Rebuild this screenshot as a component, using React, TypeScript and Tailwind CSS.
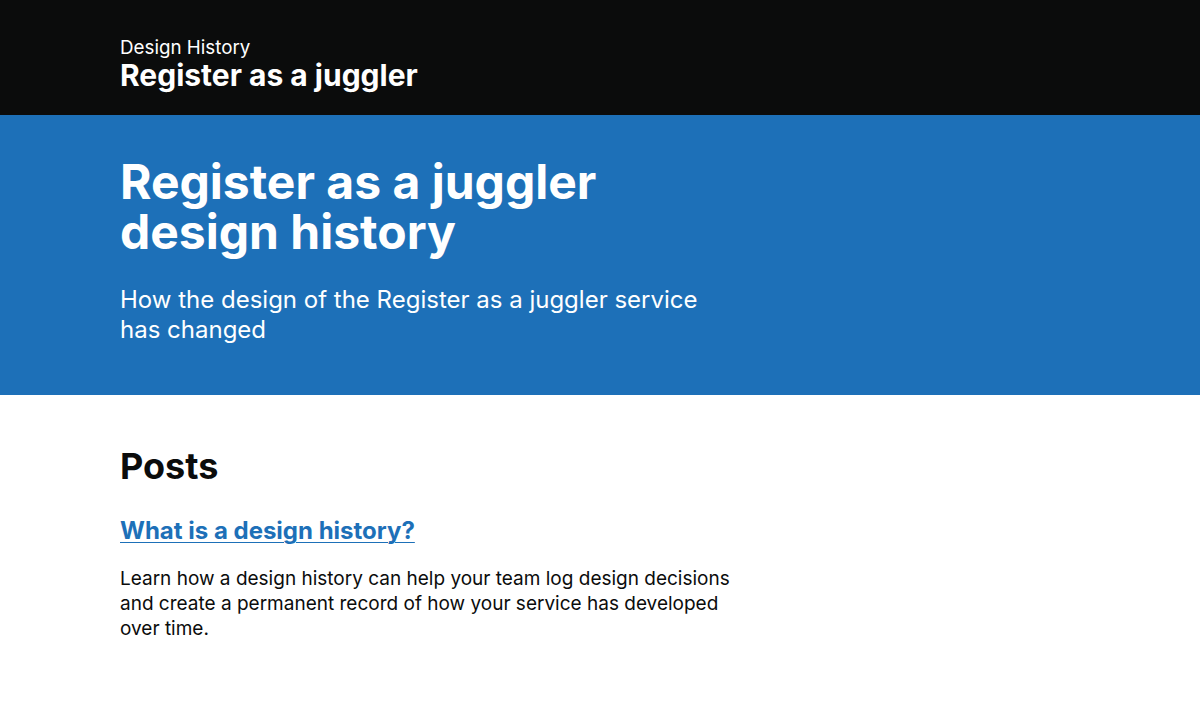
import React from 'react';

const font = { fontFamily: 'Inter, "Noto Sans", sans-serif' };

export default function App() {
  return (
    <div style={font} className="min-h-screen bg-white text-[#0b0c0c]">
      <header className="bg-[#0b0c0c] text-white h-[115px]">
        <div className="mx-auto w-[960px] pt-[38px]">
          <div className="text-[18.8px] leading-[20px]">Design History</div>
          <div className="text-[30px] leading-[34px] font-bold">Register as a juggler</div>
        </div>
      </header>

      <section className="bg-[#1d70b8] text-white">
        <div className="mx-auto w-[960px] pt-[42px] pb-[50px]">
          <h1 className="w-[640px] text-[48px] leading-[50px] font-bold">
            Register as a juggler design history
          </h1>
          <p className="w-[610px] mt-[28px] text-[24px] leading-[30px]">
            How the design of the Register as a juggler service has changed
          </p>
        </div>
      </section>

      <main className="mx-auto w-[960px] pt-[51px]">
        <h2 className="text-[36px] leading-[40px] font-bold">Posts</h2>
        <h3 className="mt-[30px] text-[24px] leading-[30px] font-bold">
          <a href="#" className="text-[#1d70b8] underline underline-offset-[3px] decoration-[1px]">
            What is a design history?
          </a>
        </h3>
        <p className="w-[640px] mt-[20px] text-[19px] leading-[25px]">
          Learn how a design history can help your team log design decisions and create a
          permanent record of how your service has developed over time.
        </p>
      </main>
    </div>
  );
}
